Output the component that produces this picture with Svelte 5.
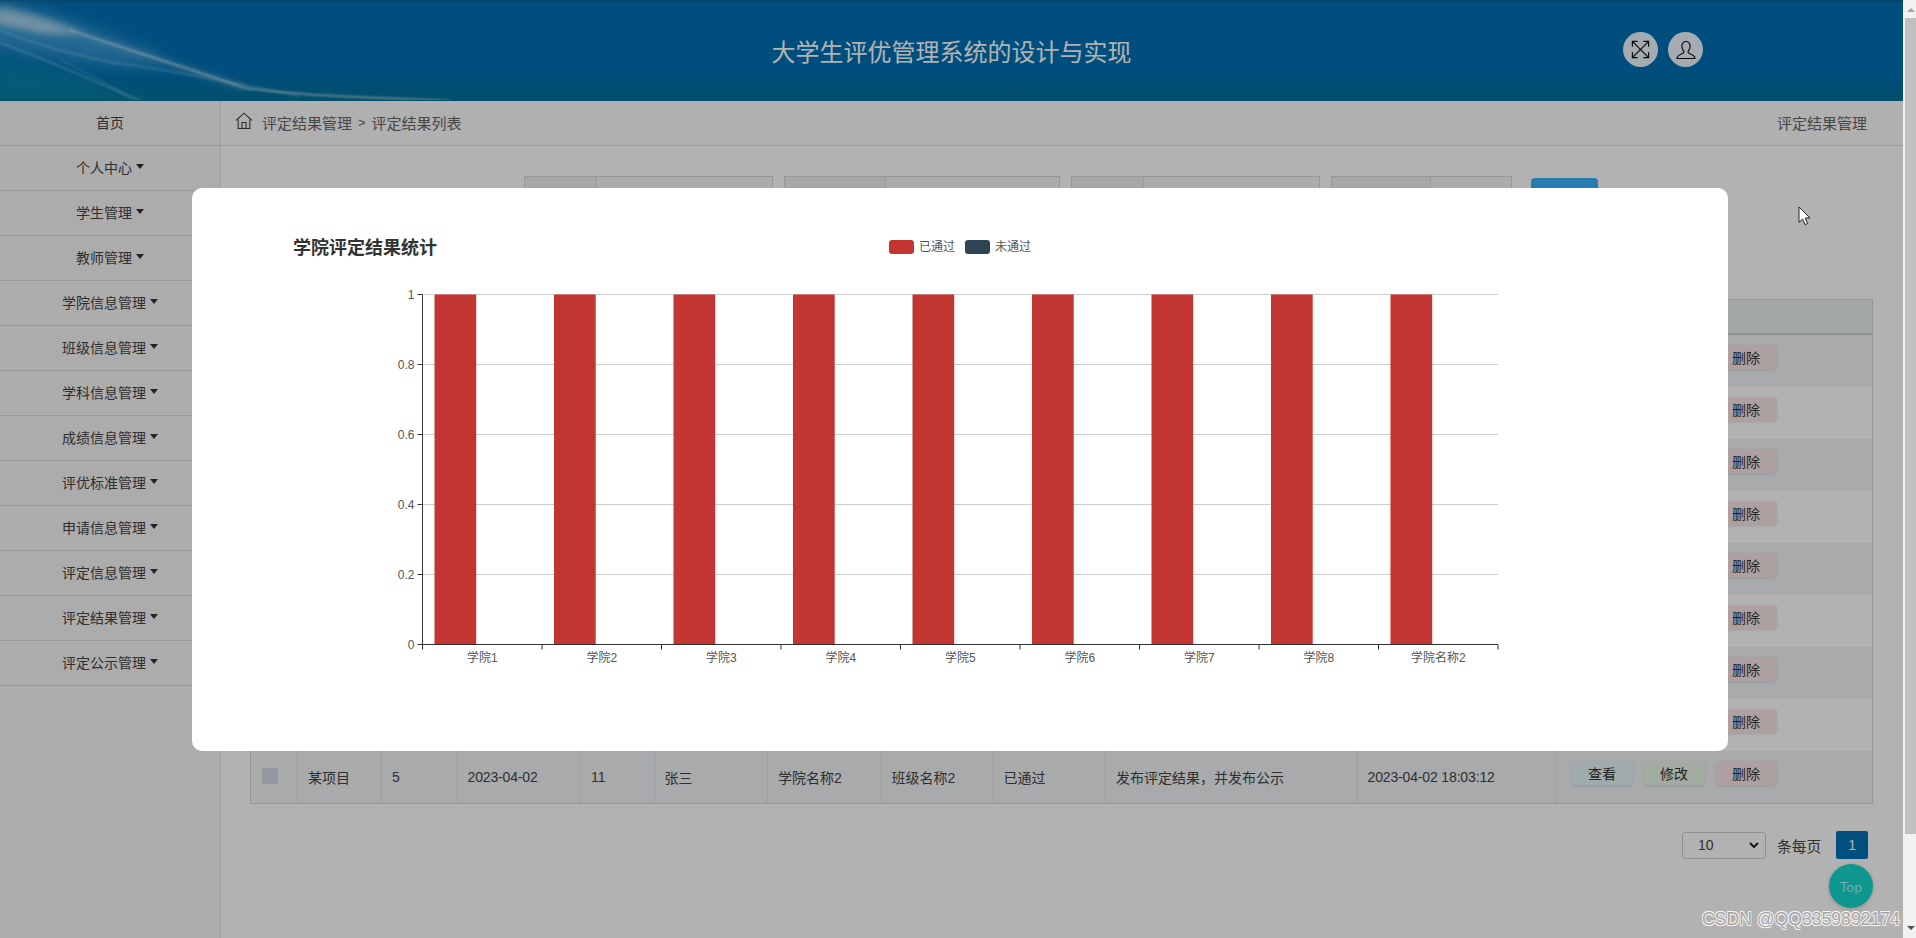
<script>
  const menu = [
    ['首页', false], ['个人中心', true], ['学生管理', true], ['教师管理', true], ['学院信息管理', true],
    ['班级信息管理', true], ['学科信息管理', true], ['成绩信息管理', true], ['评优标准管理', true],
    ['申请信息管理', true], ['评定信息管理', true], ['评定结果管理', true], ['评定公示管理', true]
  ];
  const search = [
    { w: 249, l: 71 }, { w: 276, l: 100 }, { w: 249, l: 71 }, { w: 181, l: 98 }
  ];
  const cols = [47, 84, 75.5, 123.5, 73.5, 113.5, 113.5, 112, 112.5, 251.5, 198, 317];
  const rows = Array.from({ length: 9 }, (_, i) => i);
  const ticks = [0, 0.2, 0.4, 0.6, 0.8, 1];
  const cats = ['学院1', '学院2', '学院3', '学院4', '学院5', '学院6', '学院7', '学院8', '学院名称2'];
  const ox = 230.5, oy = 456.5, step = 119.5, unit = 350;
</script>

<div class="screen">
  <div class="page">
    <header class="top">
      <svg class="swoosh" viewBox="0 0 700 100" width="700" height="100" aria-hidden="true">
        <defs>
          <filter id="b1" x="-20%" y="-50%" width="140%" height="200%"><feGaussianBlur stdDeviation="1.2" /></filter>
          <filter id="b2" x="-20%" y="-50%" width="140%" height="200%"><feGaussianBlur stdDeviation="9" /></filter>
          <filter id="b4" x="-20%" y="-50%" width="140%" height="200%"><feGaussianBlur stdDeviation="3.5" /></filter>
        </defs>
        <path d="M-20 0 C50 8 110 36 170 62 C140 70 90 62 60 58 L-20 46Z" fill="#58b0e6" opacity=".6" filter="url(#b2)" />
        <path d="M-10 56 C50 66 100 85 170 104 L-10 104Z" fill="#0a90ae" opacity=".55" filter="url(#b2)" />
        <path d="M-5 8 C30 14 55 22 82 35 L44 34 L-5 24Z" fill="#ffffff" opacity=".55" filter="url(#b4)" />
        <path d="M0 8 C35 15 65 26 90 37 C145 56 205 74 245 88" fill="none" stroke="#cfeaf8" stroke-width="5" opacity=".35" filter="url(#b4)" />
        <path d="M70 30 C110 44 170 62 245 88 C300 96 370 97 450 101" fill="none" stroke="#ffffff" stroke-width="1.8" opacity=".6" filter="url(#b1)" />
        <path d="M0 30 C50 50 100 62 150 68 C200 76 240 84 300 96" fill="none" stroke="#8fd0ee" stroke-width="2" opacity=".4" filter="url(#b1)" />
        <path d="M0 43 C40 56 90 80 142 101" fill="none" stroke="#9fd6ee" stroke-width="1.6" opacity=".5" filter="url(#b1)" />
        <path d="M60 60 C90 74 115 88 135 101" fill="none" stroke="#9fd6ee" stroke-width="1.4" opacity=".25" filter="url(#b1)" />
      </svg>
      <h1>大学生评优管理系统的设计与实现</h1>
      <div class="tools">
        <span class="tool">
          <svg viewBox="0 0 20 20" width="19" height="19" fill="none" stroke="#111" stroke-width="1.3">
            <path d="M1.5 1.5 L18.5 18.5 M18.5 1.5 L1.5 18.5" />
            <path d="M1.5 7 V1.5 H7 M13 1.5 H18.5 V7 M18.5 13 V18.5 H13 M7 18.5 H1.5 V13" />
          </svg>
        </span>
        <span class="tool">
          <svg viewBox="0 0 20 20" width="20" height="20" fill="none" stroke="#111" stroke-width="1.2">
            <path d="M1 18.5 H19 C19 15 15 14.2 12.6 13 C11.8 12.4 11.9 11.6 12.6 10.6 C14 8.8 14.4 6.8 14 5 C13.4 2.6 11.6 1.5 10 1.5 C8.4 1.5 6.6 2.6 6 5 C5.6 6.8 6 8.8 7.4 10.6 C8.1 11.6 8.2 12.4 7.4 13 C5 14.2 1 15 1 18.5Z" />
          </svg>
        </span>
      </div>
    </header>

    <div class="body">
      <nav class="side">
        {#each menu as [label, caret]}
          <div class="item">{label}{#if caret}<i class="caret"></i>{/if}</div>
        {/each}
      </nav>

      <main class="main">
        <div class="crumb">
          <div class="trail">
            <svg class="home" viewBox="0 0 18 18" width="18" height="18" fill="none" stroke="#444" stroke-width="1.1">
              <path d="M1 8.5 L9 1.2 L17 8.5" />
              <path d="M3.2 7.5 V16.5 H14.8 V7.5" />
              <path d="M7 16.5 V10.5 H11 V16.5" />
            </svg>
            <span>评定结果管理</span><b>&gt;</b><span>评定结果列表</span>
          </div>
          <span>评定结果管理</span>
        </div>

        <div class="search">
          {#each search as s}
            <div class="group" style="width:{s.w}px">
              <span class="addon" style="width:{s.l}px"></span>
            </div>
          {/each}
          <span class="go"></span>
        </div>

        <div class="table">
          <div class="tr head">
            {#each cols as c}
              <span class="td" style="width:{c}px"></span>
            {/each}
          </div>
          {#each rows as r}
            <div class="tr" class:odd={r % 2 === 0}>
              <span class="td" style="width:{cols[0]}px"><i class="check"></i></span>
              <span class="td" style="width:{cols[1]}px">某项目</span>
              <span class="td" style="width:{cols[2]}px">5</span>
              <span class="td dt" style="width:{cols[3]}px">2023-04-02</span>
              <span class="td" style="width:{cols[4]}px">11</span>
              <span class="td" style="width:{cols[5]}px">张三</span>
              <span class="td" style="width:{cols[6]}px">学院名称2</span>
              <span class="td" style="width:{cols[7]}px">班级名称2</span>
              <span class="td" style="width:{cols[8]}px">已通过</span>
              <span class="td" style="width:{cols[9]}px">发布评定结果，并发布公示</span>
              <span class="td dt" style="width:{cols[10]}px">2023-04-02 18:03:12</span>
              <span class="td ops" style="width:{cols[11]}px">
                <span class="btn view">查看</span>
                <span class="btn edit">修改</span>
                <span class="btn del">删除</span>
              </span>
            </div>
          {/each}
        </div>

        <div class="pager">
          <span class="select">10
            <svg viewBox="0 0 10 6" width="10" height="6"><path d="M1 1 L5 5 L9 1" fill="none" stroke="#222" stroke-width="2" /></svg>
          </span>
          <span class="per">条每页</span>
          <span class="num">1</span>
        </div>
      </main>
    </div>

    <span class="totop">Top</span>

    <div class="mask">
      <div class="modal">
        <svg class="chart" viewBox="0 0 1536 563" width="1536" height="563">
          <text x="101" y="66" class="title">学院评定结果统计</text>
          <rect x="697" y="52" width="25" height="14" rx="3" fill="#c23531" />
          <text x="727" y="63" class="lbl">已通过</text>
          <rect x="773" y="52" width="25" height="14" rx="3" fill="#2f4554" />
          <text x="803" y="63" class="lbl">未通过</text>

          {#each ticks as t}
            {@const y = oy - t * unit}
            {#if t > 0}<line x1={ox} x2={ox + step * 9} y1={y} y2={y} stroke="#ccc" />{/if}
            <line x1={ox - 5} x2={ox} y1={y} y2={y} stroke="#333" />
            <text x={ox - 8} y={y + 4} text-anchor="end" class="lbl">{t}</text>
          {/each}
          {#each cats as c, i}
            <rect x={ox + i * step + 12} y={oy - unit} width="41.7" height={unit} fill="#c23531" />
            <line x1={ox + i * step} x2={ox + i * step} y1={oy} y2={oy + 5} stroke="#333" />
            <text x={ox + i * step + step / 2} y={oy + 17} text-anchor="middle" class="lbl">{c}</text>
          {/each}
          <line x1={ox + step * 9} x2={ox + step * 9} y1={oy} y2={oy + 5} stroke="#333" />
          <line x1={ox} x2={ox} y1={oy - unit} y2={oy} stroke="#333" />
          <line x1={ox} x2={ox + step * 9} y1={oy} y2={oy} stroke="#333" />
        </svg>
      </div>
    </div>

    <span class="mark">CSDN @QQ3359892174</span>
    <svg class="cursor" viewBox="0 0 13 20" width="13" height="20">
      <path d="M1 1 V16.5 L4.6 13 L7 18.6 L9.6 17.5 L7.2 12 H12 Z" fill="#fff" stroke="#222" stroke-width="1" />
    </svg>
  </div>

  <div class="bar">
    <span class="arrow up"></span>
    <span class="thumb"></span>
    <span class="arrow down"></span>
  </div>
</div>

<style>
  :global(body) {
    margin: 0;
    overflow: hidden;
  }
  .screen {
    display: flex;
    width: 1916px;
    height: 938px;
    overflow: hidden;
    font-family: "Liberation Sans", "Noto Sans CJK SC", sans-serif;
    font-size: 14px;
    color: #444;
  }
  .page {
    position: relative;
    width: 1903px;
    height: 938px;
    background: #fff;
    overflow: hidden;
  }
  .top {
    position: relative;
    height: 101px;
    display: flex;
    align-items: center;
    justify-content: center;
    background: linear-gradient(180deg, #0a5f94 0, #0070b4 3%, #0070b4 70%, #03709a 100%);
    overflow: hidden;
  }
  .swoosh {
    position: absolute;
    left: 0;
    top: 0;
  }
  .top h1 {
    position: relative;
    margin: 0 0 -1px;
    font-size: 24px;
    font-weight: 400;
    color: #fff;
    transform: translateY(-1px);
  }
  .tools {
    position: absolute;
    top: 32px;
    left: 1623px;
    display: flex;
    gap: 10px;
  }
  .tool {
    width: 35px;
    height: 35px;
    border-radius: 50%;
    background: #ebf7ff;
    display: flex;
    align-items: center;
    justify-content: center;
  }
  .body {
    display: flex;
  }
  .side {
    width: 221px;
    height: 837px;
    flex: none;
    box-sizing: border-box;
    background: #f6f6f6;
    border-right: 1px solid #e6e6e6;
  }
  .item {
    height: 45px;
    box-sizing: border-box;
    border-bottom: 1px solid #dcdcdc;
    padding-bottom: 2px;
    display: flex;
    align-items: center;
    justify-content: center;
    color: #444;
  }
  .caret {
    margin-left: 4px;
    border-top: 5px solid #333;
    border-left: 4px solid transparent;
    border-right: 4px solid transparent;
    margin-top: -1px;
  }
  .main {
    flex: 1;
    min-width: 0;
  }
  .crumb {
    height: 45px;
    box-sizing: border-box;
    padding: 0 36px 2px 14px;
    display: flex;
    align-items: center;
    justify-content: space-between;
    border-bottom: 1px solid #e4e4e4;
    background: #fcfcfc;
    font-size: 15px;
    color: #666;
  }
  .trail {
    display: flex;
    align-items: center;
  }
  .home {
    margin: -2px 9px 0 0;
  }
  .trail b {
    font-weight: 400;
    margin: 0 6px;
    font-size: 13px;
  }
  .search {
    display: flex;
    gap: 11px;
    padding: 30px 0 0 303px;
    height: 154px;
    box-sizing: border-box;
    align-items: flex-start;
  }
  .group {
    height: 40px;
    border: 1px solid #d8d8d8;
    box-sizing: border-box;
    display: flex;
    background: #f6f6f6;
  }
  .addon {
    background: #f0f0f0;
    border-right: 1px solid #dcdcdc;
  }
  .go {
    width: 67px;
    height: 38px;
    margin: 2px 0 0 8px;
    border-radius: 4px;
    background: #3cb2ff;
  }
  .table {
    border: 1px solid #d6dadd;
    width: 1623px;
    box-sizing: border-box;
    margin: -1px 0 0 29px;
  }
  .tr {
    display: flex;
    height: 52px;
  }
  .tr.odd {
    background: #f2f4f7;
  }
  .tr.head {
    height: 35px;
    background: #ebf1f1;
    border-bottom: 2px solid #cad0d0;
    box-sizing: border-box;
  }
  .td {
    flex: none;
    box-sizing: border-box;
    padding: 0 10px;
    display: flex;
    align-items: center;
    border-right: 1px solid #dee2e6;
    color: #444;
    white-space: nowrap;
  }
  .td:last-child {
    border-right: 0;
  }
  .dt {
    letter-spacing: -0.15px;
  }
  .check {
    width: 16px;
    height: 16px;
    background: #d3d9e2;
    border-radius: 2px;
    margin: -2px 0 0 1px;
  }
  .ops {
    padding: 10px 0 0 16px;
    gap: 11px;
    align-items: flex-start;
  }
  .btn {
    width: 61px;
    height: 24px;
    border-radius: 4px;
    display: flex;
    align-items: center;
    justify-content: center;
    box-shadow: 0 1px 3px rgba(0, 0, 0, 0.12);
    color: #333;
  }
  .view { background: #e6f5f7; }
  .edit { background: #e8f6e8; }
  .del { background: #f6e6e6; }
  .pager {
    display: flex;
    align-items: center;
    padding: 27px 0 0 1461px;
    color: #444;
  }
  .select {
    width: 84px;
    height: 27px;
    box-sizing: border-box;
    border: 1px solid #cfcfcf;
    border-radius: 3px;
    padding: 0 6px 0 15px;
    display: flex;
    align-items: center;
    justify-content: space-between;
    margin-right: 11px;
  }
  .per {
    font-size: 14.7px;
  }
  .num {
    width: 32px;
    height: 28px;
    background: #0072b5;
    color: #fff;
    display: flex;
    align-items: center;
    justify-content: center;
    margin-left: 15px;
    border-radius: 2px;
  }
  .totop {
    position: absolute;
    left: 1829px;
    top: 864px;
    width: 44px;
    height: 44px;
    border-radius: 50%;
    background: #14d8cc;
    color: #a9f4f2;
    display: flex;
    align-items: center;
    justify-content: center;
    font-family: Lato, sans-serif;
    font-size: 14px;
    box-shadow: 0 1px 4px rgba(0, 0, 0, 0.2);
  }
  .mask {
    position: absolute;
    inset: 0;
    background: rgba(0, 0, 0, 0.3);
    padding: 188px 0 0 192px;
    box-sizing: border-box;
  }
  .modal {
    width: 1536px;
    height: 563px;
    background: #fff;
    border-radius: 10px;
    overflow: hidden;
  }
  .chart {
    display: block;
  }
  .title {
    font-size: 18px;
    font-weight: 700;
    fill: #333;
  }
  .lbl {
    font-size: 12px;
    fill: #555;
  }
  .mark {
    position: absolute;
    left: 1702px;
    top: 909px;
    font-size: 17.6px;
    white-space: nowrap;
    color: #a5a5a5;
    text-shadow: 0.7px 0.7px 0 #f4f4f4, -0.7px 0.7px 0 #f4f4f4, 0.7px -0.7px 0 #f4f4f4, -0.7px -0.7px 0 #f4f4f4;
  }
  .cursor {
    position: absolute;
    left: 1798px;
    top: 206px;
  }
  .bar {
    width: 13px;
    height: 938px;
    flex: none;
    background: #f1f1f1;
    display: flex;
    flex-direction: column;
    box-sizing: border-box;
    padding-left: 2px;
    position: relative;
  }
  .arrow {
    position: absolute;
    left: 4px;
    border-left: 4px solid transparent;
    border-right: 4px solid transparent;
  }
  .arrow.up {
    top: 8px;
    border-bottom: 4px solid #a3a3a3;
  }
  .arrow.down {
    bottom: 8px;
    border-top: 4px solid #505050;
  }
  .thumb {
    display: block;
    margin-top: 18px;
    height: 816px;
    background: #c1c1c1;
  }
</style>
